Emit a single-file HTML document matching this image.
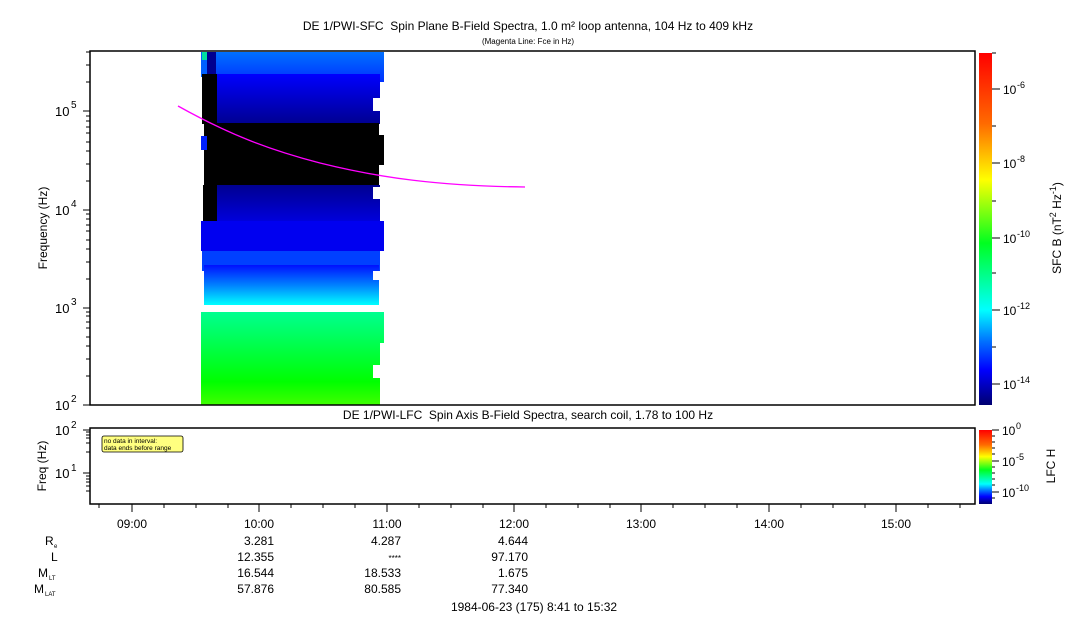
<!DOCTYPE html>
<html><head><meta charset="utf-8"><style>
html,body{margin:0;padding:0;background:#fff;}
svg{display:block;font-family:"Liberation Sans",sans-serif;}
</style></head><body>
<svg width="1083" height="620" viewBox="0 0 1083 620" xmlns="http://www.w3.org/2000/svg">
<defs>
<linearGradient id="cb" x1="0" y1="0" x2="0" y2="1">
<stop offset="0" stop-color="#ff0000"/><stop offset="0.2" stop-color="#ff6a00"/>
<stop offset="0.36" stop-color="#ffff00"/><stop offset="0.54" stop-color="#00ff20"/>
<stop offset="0.73" stop-color="#00ffff"/><stop offset="0.82" stop-color="#0070ff"/>
<stop offset="0.9" stop-color="#0000ff"/><stop offset="1" stop-color="#000070"/>
</linearGradient>
<linearGradient id="g1" x1="0" y1="0" x2="0" y2="1"><stop offset="0" stop-color="#0070ff"/><stop offset="1" stop-color="#0030ff"/></linearGradient>
<linearGradient id="g2" x1="0" y1="0" x2="0" y2="1"><stop offset="0" stop-color="#0000ff"/><stop offset="1" stop-color="#000090"/></linearGradient>
<linearGradient id="g3" x1="0" y1="0" x2="0" y2="1"><stop offset="0" stop-color="#000090"/><stop offset="1" stop-color="#0000e0"/></linearGradient>
<linearGradient id="g4" x1="0" y1="0" x2="0" y2="1"><stop offset="0" stop-color="#0010ff"/><stop offset="0.5" stop-color="#0080ff"/><stop offset="1" stop-color="#00ffff"/></linearGradient>
<linearGradient id="g5" x1="0" y1="0" x2="0" y2="1"><stop offset="0" stop-color="#00ff90"/><stop offset="0.75" stop-color="#00ff00"/><stop offset="1" stop-color="#40ff00"/></linearGradient>
</defs>
<text x="528" y="30" font-size="12" text-anchor="middle">DE 1/PWI-SFC&#160; Spin Plane B-Field Spectra, 1.0 m² loop antenna, 104 Hz to 409 kHz</text>
<text x="528" y="44" font-size="8" text-anchor="middle">(Magenta Line: Fce in Hz)</text>
<!-- spectrogram -->
<rect x="216" y="52" width="168" height="30" fill="url(#g1)"/>
<rect x="201" y="52" width="6" height="25" fill="#0060ff"/>
<rect x="202" y="52" width="5" height="8" fill="#00e0a0"/>
<rect x="207" y="52" width="9" height="24" fill="#000090"/>
<rect x="216" y="74" width="164" height="50" fill="url(#g2)"/>
<rect x="373" y="98" width="7" height="13" fill="#fff"/>
<rect x="202" y="74" width="15" height="50" fill="#000"/>
<rect x="204" y="123" width="175" height="63" fill="#000"/>
<rect x="379" y="135" width="5" height="30" fill="#000"/>
<rect x="201" y="136" width="6" height="14" fill="#0020ff"/>
<rect x="217" y="185" width="163" height="38" fill="url(#g3)"/>
<rect x="373" y="187" width="7" height="12" fill="#fff"/>
<rect x="203" y="185" width="14" height="40" fill="#000"/>
<rect x="201" y="221" width="183" height="30" fill="#0000f0"/>
<rect x="202" y="251" width="178" height="20" fill="#0040ff"/>
<rect x="204" y="265" width="175" height="40" fill="url(#g4)"/>
<rect x="373" y="271" width="7" height="9" fill="#fff"/>
<rect x="201" y="312" width="183" height="93" fill="url(#g5)"/>
<rect x="380" y="343" width="4" height="62" fill="#fff"/>
<rect x="373" y="365" width="7" height="13" fill="#fff"/>
<path d="M178,106 C230,135 270,150 320,163 C380,178 440,186 525,187" fill="none" stroke="#ff00ff" stroke-width="1.3"/>
<!-- main box -->
<rect x="90" y="51" width="885" height="354" fill="none" stroke="#000" stroke-width="1.5"/>
<g stroke="#000" stroke-width="1">
<line x1="83" y1="405" x2="90" y2="405"/><line x1="83" y1="308" x2="90" y2="308"/><line x1="83" y1="210" x2="90" y2="210"/><line x1="83" y1="111" x2="90" y2="111"/>
</g>
<g stroke="#000" stroke-width="1">
<path d="M86,376H90M86,359H90M86,346H90M86,337H90M86,328H90M86,322H90M86,316H90M86,312H90
M86,279H90M86,262H90M86,249H90M86,240H90M86,231H90M86,225H90M86,219H90M86,214H90
M86,181H90M86,164H90M86,151H90M86,142H90M86,133H90M86,127H90M86,121H90M86,116H90
M86,82H90M86,65H90M86,52H90"/>
</g>
<g font-size="13">
<text x="55" y="410">10</text><text x="71" y="402" font-size="10">2</text>
<text x="55" y="313">10</text><text x="71" y="305" font-size="10">3</text>
<text x="55" y="215">10</text><text x="71" y="207" font-size="10">4</text>
<text x="55" y="116">10</text><text x="71" y="108" font-size="10">5</text>
</g>
<text transform="translate(47,228) rotate(-90)" font-size="12" text-anchor="middle">Frequency (Hz)</text>
<!-- colorbar -->
<rect x="979" y="53" width="13" height="352" fill="url(#cb)"/>
<g stroke="#000"><path d="M992,53H996M992,89H1000M992,126H996M992,163H1000M992,201H996M992,238H1000M992,273H996M992,310H1000M992,347H996M992,384H1000"/></g>
<g font-size="12">
<text x="1003" y="94">10</text><text x="1017" y="88" font-size="9">-6</text>
<text x="1003" y="168">10</text><text x="1017" y="162" font-size="9">-8</text>
<text x="1003" y="243">10</text><text x="1017" y="237" font-size="9">-10</text>
<text x="1003" y="315">10</text><text x="1017" y="309" font-size="9">-12</text>
<text x="1003" y="389">10</text><text x="1017" y="383" font-size="9">-14</text>
</g>
<text transform="translate(1061,228) rotate(-90)" font-size="12" text-anchor="middle">SFC B (nT<tspan font-size="9" dy="-5">2</tspan><tspan dy="5"> Hz</tspan><tspan font-size="9" dy="-5">-1</tspan><tspan dy="5">)</tspan></text>
<!-- lower panel -->
<text x="528" y="419" font-size="12" text-anchor="middle">DE 1/PWI-LFC&#160; Spin Axis B-Field Spectra, search coil, 1.78 to 100 Hz</text>
<rect x="90" y="428" width="885" height="76" fill="none" stroke="#000" stroke-width="1.5"/>
<g stroke="#000"><path d="M83,430H90M83,473H90M86,452H90M86,443H90M86,438H90M86,435H90M86,432H90M86,491H90M86,486H90M86,482H90M86,479H90M86,476H90"/></g>
<g font-size="13">
<text x="55" y="435">10</text><text x="71" y="428" font-size="10">2</text>
<text x="55" y="478">10</text><text x="71" y="471" font-size="10">1</text>
</g>
<text transform="translate(46,466) rotate(-90)" font-size="12" text-anchor="middle">Freq (Hz)</text>
<rect x="102" y="436" width="81" height="16" rx="2" fill="#ffff80" stroke="#000" stroke-width="0.8"/>
<text x="104" y="443" font-size="6.5">no data in interval:</text>
<text x="104" y="450" font-size="6.5">data ends before range</text>
<rect x="979" y="430" width="13" height="74" fill="url(#cb)"/>
<g stroke="#000"><path d="M992,430H999M992,461H999M992,492H999M992,436H995M992,442H995M992,448H995M992,454H995M992,467H995M992,473H995M992,479H995M992,485H995M992,498H995"/></g>
<g font-size="12">
<text x="1002" y="435">10</text><text x="1016" y="429" font-size="9">0</text>
<text x="1002" y="466">10</text><text x="1016" y="460" font-size="9">-5</text>
<text x="1002" y="497">10</text><text x="1016" y="491" font-size="9">-10</text>
</g>
<text transform="translate(1055,466) rotate(-90)" font-size="12" text-anchor="middle">LFC H</text>
<!-- time axis -->
<g stroke="#000">
<path d="M99,504V508M132,504V512M164,504V508M196,504V508M228,504V508M259,504V512M291,504V508M323,504V508M355,504V508M387,504V512M419,504V508M451,504V508M483,504V508M514,504V512M546,504V508M578,504V508M610,504V508M641,504V512M673,504V508M705,504V508M737,504V508M769,504V512M801,504V508M833,504V508M865,504V508M896,504V512M928,504V508M960,504V508"/>
</g>
<g font-size="12" text-anchor="middle">
<text x="132" y="528">09:00</text><text x="259" y="528">10:00</text><text x="387" y="528">11:00</text><text x="514" y="528">12:00</text><text x="641" y="528">13:00</text><text x="769" y="528">14:00</text><text x="896" y="528">15:00</text>
</g>
<g font-size="12" text-anchor="end">
<text x="274" y="545">3.281</text><text x="401" y="545">4.287</text><text x="528" y="545">4.644</text>
<text x="274" y="561">12.355</text><text x="401" y="561" font-size="8">****</text><text x="528" y="561">97.170</text>
<text x="274" y="577">16.544</text><text x="401" y="577">18.533</text><text x="528" y="577">1.675</text>
<text x="274" y="593">57.876</text><text x="401" y="593">80.585</text><text x="528" y="593">77.340</text>
</g>
<g font-size="12">
<text x="45" y="545">R</text><text x="54" y="548" font-size="6">e</text>
<text x="51" y="561">L</text>
<text x="38" y="577">M</text><text x="49" y="580" font-size="6">LT</text>
<text x="34" y="593">M</text><text x="45" y="596" font-size="6">LAT</text>
</g>
<text x="534" y="611" font-size="12" text-anchor="middle">1984-06-23 (175) 8:41 to 15:32</text>
</svg>
</body></html>
